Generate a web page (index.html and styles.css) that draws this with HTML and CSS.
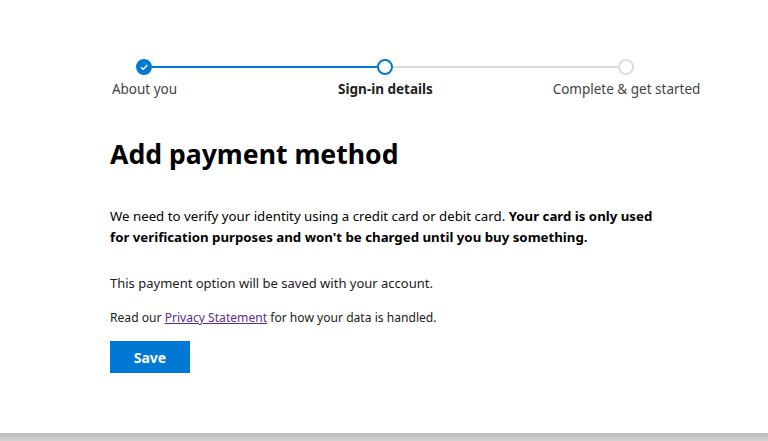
FILE: index.html
```html
<!DOCTYPE html>
<html lang="en">
<head>
    <meta charset="UTF-8">
    <meta name="viewport" content="width=device-width, initial-scale=1.0">
    <title>Add payment method</title>
    <link rel="stylesheet" href="styles.css">
</head>
<body>

    <div class="page">
        <div class="stepper">
            <div class="track">
                <span class="dot done">
                    <svg width="10" height="10" viewBox="0 0 10 10"><path d="M2 5.2 L4.2 7.3 L8.2 3" fill="none" stroke="#fff" stroke-width="1.3"/></svg>
                </span>
                <span class="line active"></span>
                <span class="dot current"></span>
                <span class="line"></span>
                <span class="dot"></span>
            </div>
            <div class="labels">
                <span>About you</span>
                <span class="current-label">Sign-in details</span>
                <span>Complete &amp; get started</span>
            </div>
        </div>

        <div class="content">
            <h1>Add payment method</h1>

            <p class="intro">We need to verify your identity using a credit card or debit card. <b>Your card is only used for verification purposes and won't be charged until you buy something.</b></p>

            <p class="note">This payment option will be saved with your account.</p>

            <p class="small">Read our <a href="#">Privacy Statement</a> for how your data is handled.</p>

            <button>Save</button>
        </div>
    </div>

</body>
</html>
```

FILE: styles.css
```css
body {
    margin: 0;
    padding: 0;
    font-family: "Noto Sans", "Open Sans", sans-serif;
    color: #1b1b1b;
    background: linear-gradient(to bottom, #fff 433px, #bababa 433px, #d2d2d2 441px);
    min-height: 441px;
}
.page {
    height: 433px;
    background: white;
    overflow: hidden;
}
.stepper {
    padding-top: 59px;
}
.track {
    display: flex;
    align-items: center;
    margin-left: 136px;
}
.dot {
    width: 16px;
    height: 16px;
    box-sizing: border-box;
    border-radius: 50%;
    border: 2px solid #dcdcdc;
    background: white;
    display: flex;
    align-items: center;
    justify-content: center;
}
.dot.done {
    background: #0078d4;
    border-color: #0078d4;
}
.dot.current {
    border-color: #0078d4;
}
.line {
    width: 225px;
    height: 2px;
    background: #dcdcdc;
}
.line.active {
    background: #0078d4;
}
.labels {
    display: grid;
    grid-template-columns: repeat(3, 241px);
    margin-left: 24px;
    margin-top: 5px;
    font-size: 13.5px;
    line-height: 18px;
    color: #444;
    text-align: center;
}
.current-label {
    font-weight: bold;
    color: #222;
}
.content {
    padding-left: 110px;
    width: 548px;
}
h1 {
    font-size: 26.6px;
    line-height: 34px;
    margin: 39px 0 0;
    color: #000;
}
p {
    margin: 0;
}
.intro {
    font-size: 13.25px;
    line-height: 21px;
    margin-top: 35px;
    color: #000;
}
.note {
    font-size: 13px;
    line-height: 20px;
    margin-top: 25px;
}
.small {
    font-size: 12.1px;
    line-height: 18px;
    margin-top: 16px;
}
a {
    color: #5c2d91;
}
button {
    margin-top: 14px;
    width: 80px;
    height: 32px;
    border: none;
    background: #0078d4;
    color: white;
    font-family: inherit;
    font-size: 14px;
    font-weight: bold;
    cursor: pointer;
}
```
